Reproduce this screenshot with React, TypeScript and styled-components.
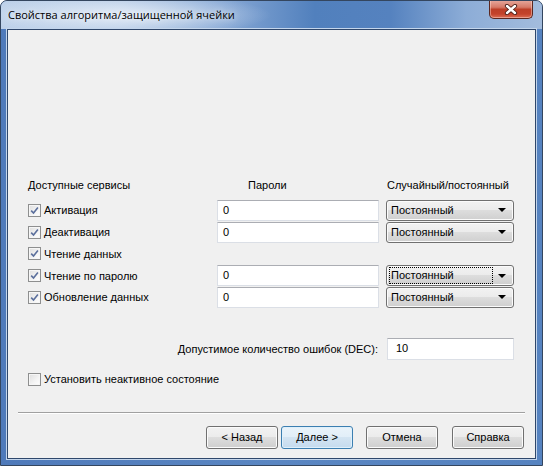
import React from 'react';
import styled, { createGlobalStyle } from 'styled-components';

const Global = createGlobalStyle`
  html, body { margin: 0; padding: 0; background: #ffffff; }
  body { width: 543px; height: 466px; overflow: hidden; }
  * { box-sizing: border-box; }
`;

const UI_FONT = `"Liberation Sans", Arial, sans-serif`;

const Window = styled.div`
  width: 543px;
  height: 466px;
  display: flex;
  flex-direction: column;
  border: 1px solid #34465f;
  border-radius: 7px 7px 0 0;
  background: #5580bf;
  box-shadow: inset 0 0 0 1px rgba(220, 232, 248, 0.55);
  overflow: hidden;
`;

const TitleBar = styled.div`
  height: 28px;
  flex: none;
  display: flex;
  align-items: flex-start;
  justify-content: space-between;
  padding-left: 7px;
  background:
    radial-gradient(ellipse 150px 22px at 120px 14px, rgba(235, 242, 250, 0.85), rgba(235, 242, 250, 0) 100%),
    linear-gradient(to right, #bcd0e9 0%, #b2c8e4 22%, #84a6d4 42%, #5180bd 58%, #5582bf 72%, #8dadd7 86%, #a3bcdd 100%);
`;

const Title = styled.div`
  font-family: "Open Sans", "Noto Sans", sans-serif;
  font-size: 11px;
  color: #000;
  line-height: 28px;
  white-space: nowrap;
  text-shadow: 0 0 6px rgba(255, 255, 255, 0.9);
`;

const CloseButton = styled.div`
  width: 44px;
  height: 19px;
  margin-right: 9px;
  margin-top: -1px;
  display: flex;
  align-items: center;
  justify-content: center;
  border: 1px solid #5b2720;
  border-top: none;
  border-radius: 0 0 5px 5px;
  background: linear-gradient(#e7aa9f 0%, #d67a68 40%, #bd3f28 52%, #c4432b 78%, #dc6e55 100%);
  box-shadow: inset 0 0 0 1px rgba(255, 225, 215, 0.45);
`;

const Body = styled.div`
  flex: 1;
  display: flex;
  padding: 0 6px 6px 6px;
  background: linear-gradient(to right, #4f7aba 0%, #5a86c2 50%, #5683c0 100%);
`;

const Client = styled.div`
  flex: 1;
  display: flex;
  flex-direction: column;
  background: #f0f0f0;
  border: 1px solid #2f476b;
  box-shadow: 0 0 0 1px #c4d6ec;
  font-family: ${UI_FONT};
  font-size: 11px;
  color: #000;
`;

const ServicesGrid = styled.div`
  display: grid;
  grid-template-columns: 182px 162px 128px;
  column-gap: 7px;
  grid-auto-rows: 21.75px;
  margin: 148px 20px 0 20px;
`;

const HeaderCell = styled.div<{ $indent?: number }>`
  height: 14px;
  line-height: 14px;
  padding-left: ${(p) => p.$indent ?? 0}px;
  white-space: nowrap;
  align-self: start;
`;

const HeaderRow = styled.div`
  display: contents;
`;

const CheckRow = styled.label`
  display: flex;
  align-items: center;
  gap: 3px;
  height: 21px;
  white-space: nowrap;
`;

const Box = styled.span`
  width: 13px;
  height: 13px;
  flex: none;
  display: flex;
  align-items: center;
  justify-content: center;
  border: 1px solid #8e8f8f;
  background: linear-gradient(135deg, #dedede 0%, #f4f4f4 60%, #ffffff 100%);
  box-shadow: inset 0 0 0 1px #f6f6f6;
`;

const TextBox = styled.div`
  height: 21px;
  background: #ffffff;
  border: 1px solid #dbdfe6;
  border-top-color: #abadb3;
  padding-left: 5px;
  line-height: 19px;
`;

const Combo = styled.div`
  height: 21px;
  display: flex;
  align-items: center;
  justify-content: space-between;
  padding: 0 7px 0 3px;
  border: 1px solid #707070;
  border-radius: 3px;
  background: linear-gradient(#f2f2f2 0%, #ebebeb 50%, #dddddd 50%, #cfcfcf 100%);
  box-shadow: inset 0 0 0 1px #fbfbfb;
`;

const ComboText = styled.span<{ $focused?: boolean }>`
  flex: 1;
  line-height: 15px;
  padding-left: 1px;
  margin-right: 6px;
  outline: ${(p) => (p.$focused ? '1px dotted #000' : 'none')};
`;

const Arrow = styled.span`
  width: 0;
  height: 0;
  border-left: 4px solid transparent;
  border-right: 4px solid transparent;
  border-top: 4px solid #000;
`;

const DecRow = styled.div`
  display: flex;
  justify-content: flex-end;
  align-items: center;
  gap: 9px;
  margin: 29px 21px 0 0;
`;

const DecBox = styled(TextBox)`
  width: 127px;
  height: 22px;
  line-height: 18px;
  padding-left: 8px;
`;

const InactiveRow = styled(CheckRow)`
  margin: 13px 0 0 20px;
  height: 13px;
`;

const Separator = styled.div`
  height: 2px;
  margin: 26px 10px 0 10px;
  border-top: 1px solid #a0a0a0;
  border-bottom: 1px solid #ffffff;
`;

const ButtonRow = styled.div`
  display: flex;
  justify-content: flex-end;
  margin: 12px 11px 0 0;
`;

const Button = styled.div<{ $default?: boolean; $gap: number }>`
  width: 72px;
  height: 23px;
  margin-left: ${(p) => p.$gap}px;
  display: flex;
  align-items: center;
  justify-content: center;
  border: 1px solid ${(p) => (p.$default ? '#3c7fb1' : '#707070')};
  border-radius: 3px;
  background: ${(p) =>
    p.$default
      ? 'linear-gradient(#eaf3fa 0%, #e1eef8 50%, #d3e4f2 50%, #c5dbee 100%)'
      : 'linear-gradient(#f2f2f2 0%, #ebebeb 50%, #dddddd 50%, #cfcfcf 100%)'};
  box-shadow: inset 0 0 0 1px ${(p) => (p.$default ? '#dff0fb' : '#fbfbfb')};
`;

const Check = () => (
  <svg width="9" height="9" viewBox="0 0 9 9">
    <path d="M1.2 4.6 L3.5 7 L7.9 1.6" fill="none" stroke="#5b6f9c" strokeWidth="1.6" />
  </svg>
);

const CloseGlyph = () => (
  <svg width="14" height="11" viewBox="0 0 14 11">
    <path d="M3 2 L11 9 M11 2 L3 9" stroke="#4a1d16" strokeWidth="4.2" strokeLinecap="round" />
    <path d="M3 2 L11 9 M11 2 L3 9" stroke="#ffffff" strokeWidth="2.4" strokeLinecap="round" />
  </svg>
);

type Service = { label: string; pwd?: string; mode?: string; focused?: boolean };

const services: Service[] = [
  { label: 'Активация', pwd: '0', mode: 'Постоянный' },
  { label: 'Деактивация', pwd: '0', mode: 'Постоянный' },
  { label: 'Чтение данных' },
  { label: 'Чтение по паролю', pwd: '0', mode: 'Постоянный', focused: true },
  { label: 'Обновление данных', pwd: '0', mode: 'Постоянный' },
];

export default function App() {
  return (
    <>
      <Global />
      <Window>
        <TitleBar>
          <Title>Свойства алгоритма/защищенной ячейки</Title>
          <CloseButton>
            <CloseGlyph />
          </CloseButton>
        </TitleBar>
        <Body>
          <Client>
            <ServicesGrid>
              <HeaderRow>
                <HeaderCell>Доступные сервисы</HeaderCell>
                <HeaderCell $indent={31}>Пароли</HeaderCell>
                <HeaderCell $indent={1}>Случайный/постоянный</HeaderCell>
              </HeaderRow>
              {services.map((s) => (
                <React.Fragment key={s.label}>
                  <CheckRow>
                    <Box>
                      <Check />
                    </Box>
                    {s.label}
                  </CheckRow>
                  {s.pwd !== undefined ? <TextBox>{s.pwd}</TextBox> : <span />}
                  {s.mode ? (
                    <Combo>
                      <ComboText $focused={s.focused}>{s.mode}</ComboText>
                      <Arrow />
                    </Combo>
                  ) : (
                    <span />
                  )}
                </React.Fragment>
              ))}
            </ServicesGrid>
            <DecRow>
              <span>Допустимое количество ошибок (DEC):</span>
              <DecBox>10</DecBox>
            </DecRow>
            <InactiveRow>
              <Box />
              Установить неактивное состояние
            </InactiveRow>
            <Separator />
            <ButtonRow>
              <Button $gap={0}>&lt; Назад</Button>
              <Button $gap={3} $default>
                Далее &gt;
              </Button>
              <Button $gap={13}>Отмена</Button>
              <Button $gap={14}>Справка</Button>
            </ButtonRow>
          </Client>
        </Body>
      </Window>
    </>
  );
}
